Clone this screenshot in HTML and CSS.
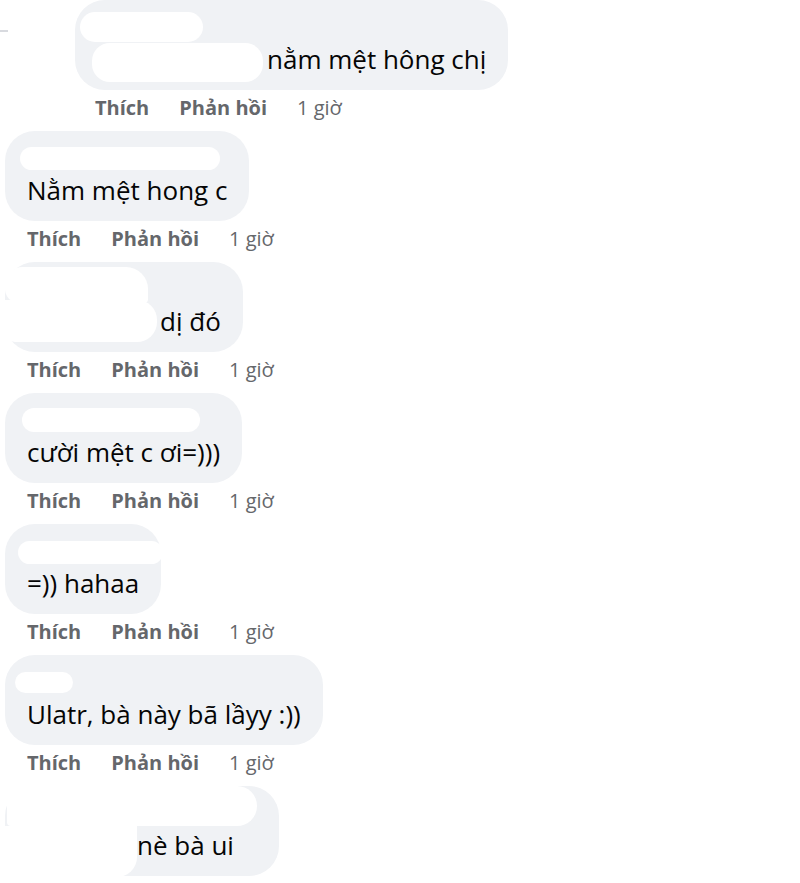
FILE: index.html
```html
<!DOCTYPE html>
<html lang="vi">
<head>
  <meta charset="UTF-8" />
  <meta name="viewport" content="width=device-width, initial-scale=1.0"/>
  <title>Bình luận</title>
  <link rel="stylesheet" href="styles.css">
</head>
<body>
  <div class="thread">

    <div class="comment reply">
      <div class="branch"></div>
      <div class="content">
        <div class="bubble b1">
          <span class="name n1"></span>
          <p class="text t1">nằm mệt hông chị</p>
          <span class="mask m1"></span>
        </div>
        <div class="actions a1">
          <span class="act">Thích</span>
          <span class="act">Phản hồi</span>
          <span class="time">1 giờ</span>
        </div>
      </div>
    </div>

    <div class="comment">
      <div class="bubble">
        <span class="name n2"></span>
        <p class="text">Nằm mệt hong c</p>
      </div>
      <div class="actions">
        <span class="act">Thích</span>
        <span class="act">Phản hồi</span>
        <span class="time">1 giờ</span>
      </div>
    </div>

    <div class="comment">
      <div class="bubble">
        <span class="name n3"></span>
        <p class="text t3">dị đó</p>
        <span class="mask m3"></span>
      </div>
      <div class="actions">
        <span class="act">Thích</span>
        <span class="act">Phản hồi</span>
        <span class="time">1 giờ</span>
      </div>
    </div>

    <div class="comment">
      <div class="bubble">
        <span class="name n4"></span>
        <p class="text">cười mệt c ơi=)))</p>
      </div>
      <div class="actions">
        <span class="act">Thích</span>
        <span class="act">Phản hồi</span>
        <span class="time">1 giờ</span>
      </div>
    </div>

    <div class="comment">
      <div class="bubble">
        <span class="name n5"></span>
        <p class="text">=)) hahaa</p>
      </div>
      <div class="actions">
        <span class="act">Thích</span>
        <span class="act">Phản hồi</span>
        <span class="time">1 giờ</span>
      </div>
    </div>

    <div class="comment">
      <div class="bubble">
        <span class="name n6"></span>
        <p class="text">Ulatr, bà này bã lầyy :))</p>
      </div>
      <div class="actions">
        <span class="act">Thích</span>
        <span class="act">Phản hồi</span>
        <span class="time">1 giờ</span>
      </div>
    </div>

    <div class="comment">
      <div class="bubble">
        <span class="name n7"></span>
        <p class="text t7">nè bà ui</p>
        <span class="mask m7"></span>
      </div>
    </div>

  </div>
</body>
</html>
```

FILE: styles.css
```css
* {
  box-sizing: border-box;
}
body {
  margin: 0;
  background: #fff;
  font-family: 'Open Sans', 'Noto Sans', sans-serif;
  color: #050505;
}
.thread {
  padding-left: 5px;
}
.reply {
  display: flex;
  margin-left: -5px;
}
.branch {
  width: 75px;
  flex-shrink: 0;
  position: relative;
}
.branch::before {
  content: "";
  position: absolute;
  left: 0;
  top: 30px;
  width: 8px;
  height: 2px;
  background: #d8dadf;
}

/* comment bubble */
.bubble {
  position: relative;
  width: fit-content;
  background: #f0f2f5;
  border-radius: 30px;
  padding: 15px 22px 14px 22px;
}
.text {
  margin: 0;
  font-size: 26px;
  line-height: 34px;
  white-space: nowrap;
}

/* white blots over the names */
.name {
  display: block;
  height: 24px;
  margin-bottom: 3px;
  margin-right: -400px;
  background: #fff;
  border-radius: 12px;
}
.mask {
  position: absolute;
  background: #fff;
}

.b1 { padding-left: 20px; }
.n1 { width: 123px; height: 30px; margin: -3px 0 0 -15px; border-radius: 15px; }
.t1 { padding-left: 172px; }
.m1 { left: 17px; top: 43px; width: 171px; height: 39px; border-radius: 18px; }

.n2 { width: 200px; height: 23px; margin-left: -7px; margin-top: 1px; }

.n3 { width: 143px; height: 36px; margin: -10px 0 1px -22px; border-radius: 18px 22px 4px 14px; }
.t3 { padding-left: 133px; }
.m3 { left: 0; top: 38px; width: 152px; height: 42px; border-radius: 0 20px 20px 10px; }

.n4 { width: 178px; margin-left: -5px; }

.n5 { width: 145px; height: 23px; margin-left: -9px; margin-top: 2px; margin-bottom: 2px; }

.n6 { width: 58px; height: 21px; margin-left: -12px; margin-top: 2px; margin-bottom: 4px; }

.n7 { width: 250px; height: 40px; margin: -15px 0 2px -20px; border-radius: 16px 20px 20px 4px; }
.t7 { padding-left: 110px; }
.m7 { left: -5px; top: 40px; width: 137px; height: 51px; border-radius: 0 0 20px 24px; }

/* like / reply row */
.actions {
  display: flex;
  gap: 30px;
  padding: 6px 0 11px 22px;
  font-size: 20px;
  line-height: 24px;
  color: #65676b;
}
.a1 { padding-left: 20px; }
.act {
  font-weight: 700;
}
```
